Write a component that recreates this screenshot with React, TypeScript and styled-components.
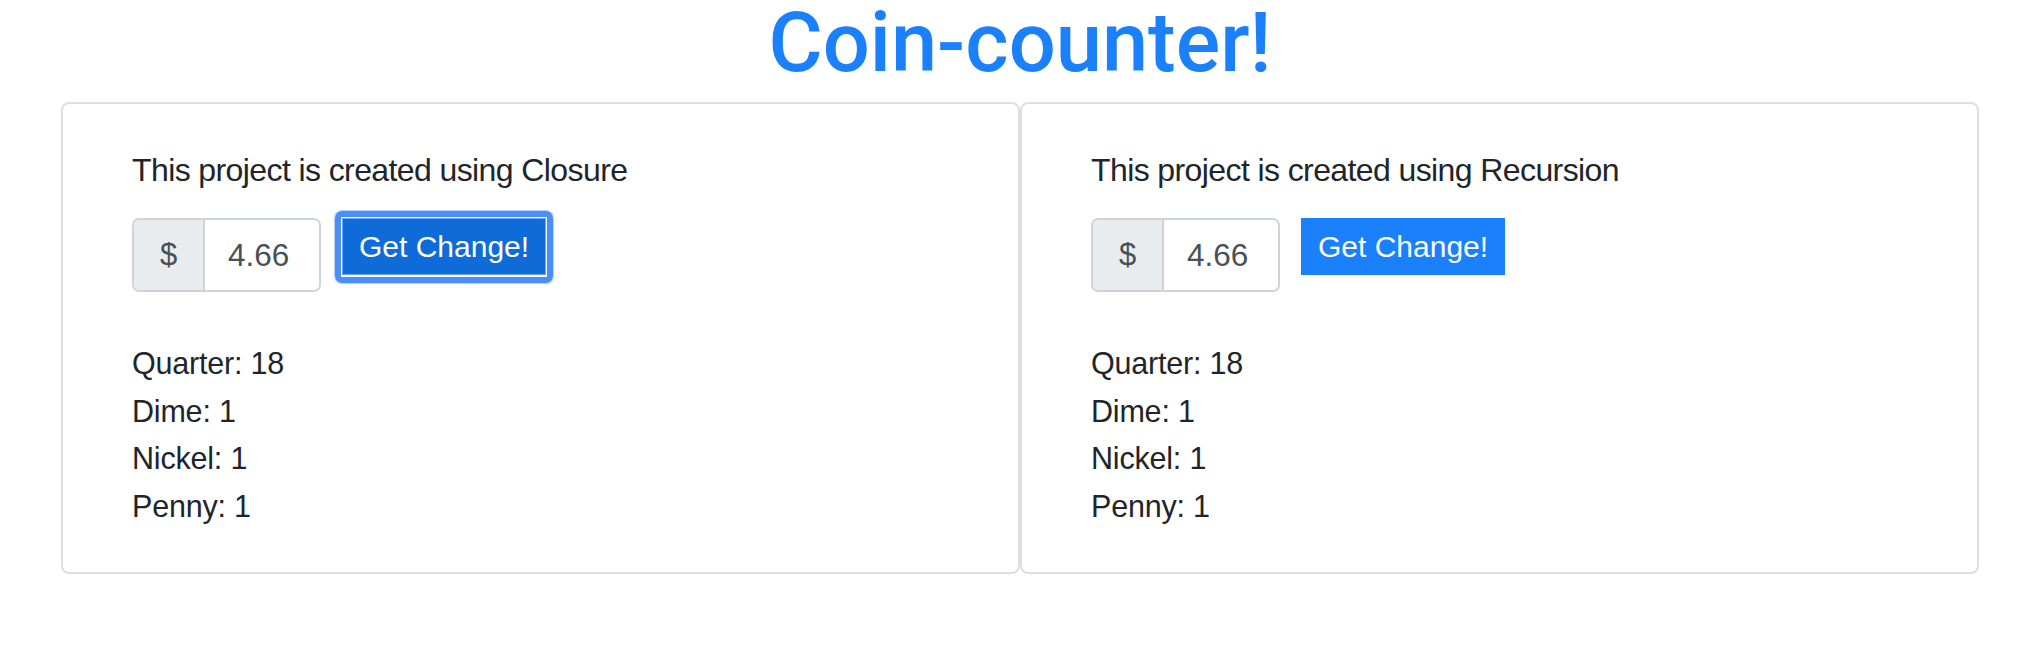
import styled, { createGlobalStyle } from 'styled-components'

// ── palette ────────────────────────────────────────
const C = {
  primary: '#1a80fb',
  primaryDark: '#0f6bd7',
  ring: '#4a8ff7',
  text: '#212529',
  inputText: '#495057',
  inputBorder: '#ced4da',
  addonBg: '#e9ecef',
  cardBorder: '#dfdfdf',
}

const Global = createGlobalStyle`
  html, body {
    margin: 0;
    padding: 0;
    background: #fff;
  }
  body {
    font-family: 'Liberation Sans', Arial, sans-serif;
    color: ${C.text};
  }
`

const Page = styled.div`
  display: flex;
  flex-direction: column;
  width: 2022px;
  height: 658px;
  padding: 0 43px 0 61px;
  box-sizing: border-box;
  overflow: hidden;
`

const Title = styled.h1`
  margin: 3px 0 19px;
  text-align: center;
  font-family: Roboto, 'Liberation Sans', sans-serif;
  font-weight: 500;
  font-size: 83px;
  line-height: 80px;
  color: ${C.primary};
`

const Row = styled.div`
  display: flex;
`

const Card = styled.div`
  flex: 1;
  border: 2px solid ${C.cardBorder};
  border-radius: 8px;
  padding: 43px 40px 42px 69px;
`

const Intro = styled.p`
  margin: 0 0 25px;
  font-size: 32px;
  line-height: 46px;
  letter-spacing: -0.6px;
`

const Controls = styled.div`
  display: flex;
  align-items: flex-start;
  gap: 21px;
`

const InputGroup = styled.div`
  display: flex;
  box-sizing: border-box;
  width: 189px;
  height: 74px;
  border: 2px solid ${C.inputBorder};
  border-radius: 7px;
  overflow: hidden;
`

const Addon = styled.span`
  display: flex;
  align-items: center;
  justify-content: center;
  box-sizing: border-box;
  width: 71px;
  border-right: 2px solid ${C.inputBorder};
  background: ${C.addonBg};
  color: ${C.inputText};
  font-size: 31px;
`

const Amount = styled.span`
  display: flex;
  align-items: center;
  flex: 1;
  padding-left: 23px;
  color: ${C.inputText};
  font-size: 31.5px;
`

const Button = styled.button<{ $focused?: boolean }>`
  position: relative;
  box-sizing: border-box;
  height: 57px;
  padding: 0 17px;
  border: 0;
  border-radius: 0;
  background: ${(p) => (p.$focused ? C.primaryDark : C.primary)};
  color: #fff;
  font-family: 'Liberation Sans', Arial, sans-serif;
  font-size: 30px;
  line-height: 57px;
  box-shadow: ${(p) => (p.$focused ? 'inset 0 0 0 1px #6ba6f8' : 'none')};

  &::after {
    content: '';
    display: ${(p) => (p.$focused ? 'block' : 'none')};
    position: absolute;
    inset: -7px -7px -8px -7px;
    border: 6px solid ${C.ring};
    border-radius: 7px;
    box-shadow: 0 0 1px 1px rgba(74, 143, 247, 0.45);
    pointer-events: none;
  }
`

const Coins = styled.div`
  margin-top: 48px;
  font-size: 30.5px;
  line-height: 47.5px;
  letter-spacing: -0.2px;
`

const coins = [
  ['Quarter', 18],
  ['Dime', 1],
  ['Nickel', 1],
  ['Penny', 1],
] as const

function CounterCard({ method, focused }: { method: string; focused?: boolean }) {
  return (
    <Card>
      <Intro>This project is created using {method}</Intro>
      <Controls>
        <InputGroup>
          <Addon>$</Addon>
          <Amount>4.66</Amount>
        </InputGroup>
        <Button $focused={focused}>Get Change!</Button>
      </Controls>
      <Coins>
        {coins.map(([name, n]) => (
          <div key={name}>
            {name}: {n}
          </div>
        ))}
      </Coins>
    </Card>
  )
}

export default function App() {
  return (
    <Page>
      <Global />
      <Title>Coin-counter!</Title>
      <Row>
        <CounterCard method="Closure" focused />
        <CounterCard method="Recursion" />
      </Row>
    </Page>
  )
}
